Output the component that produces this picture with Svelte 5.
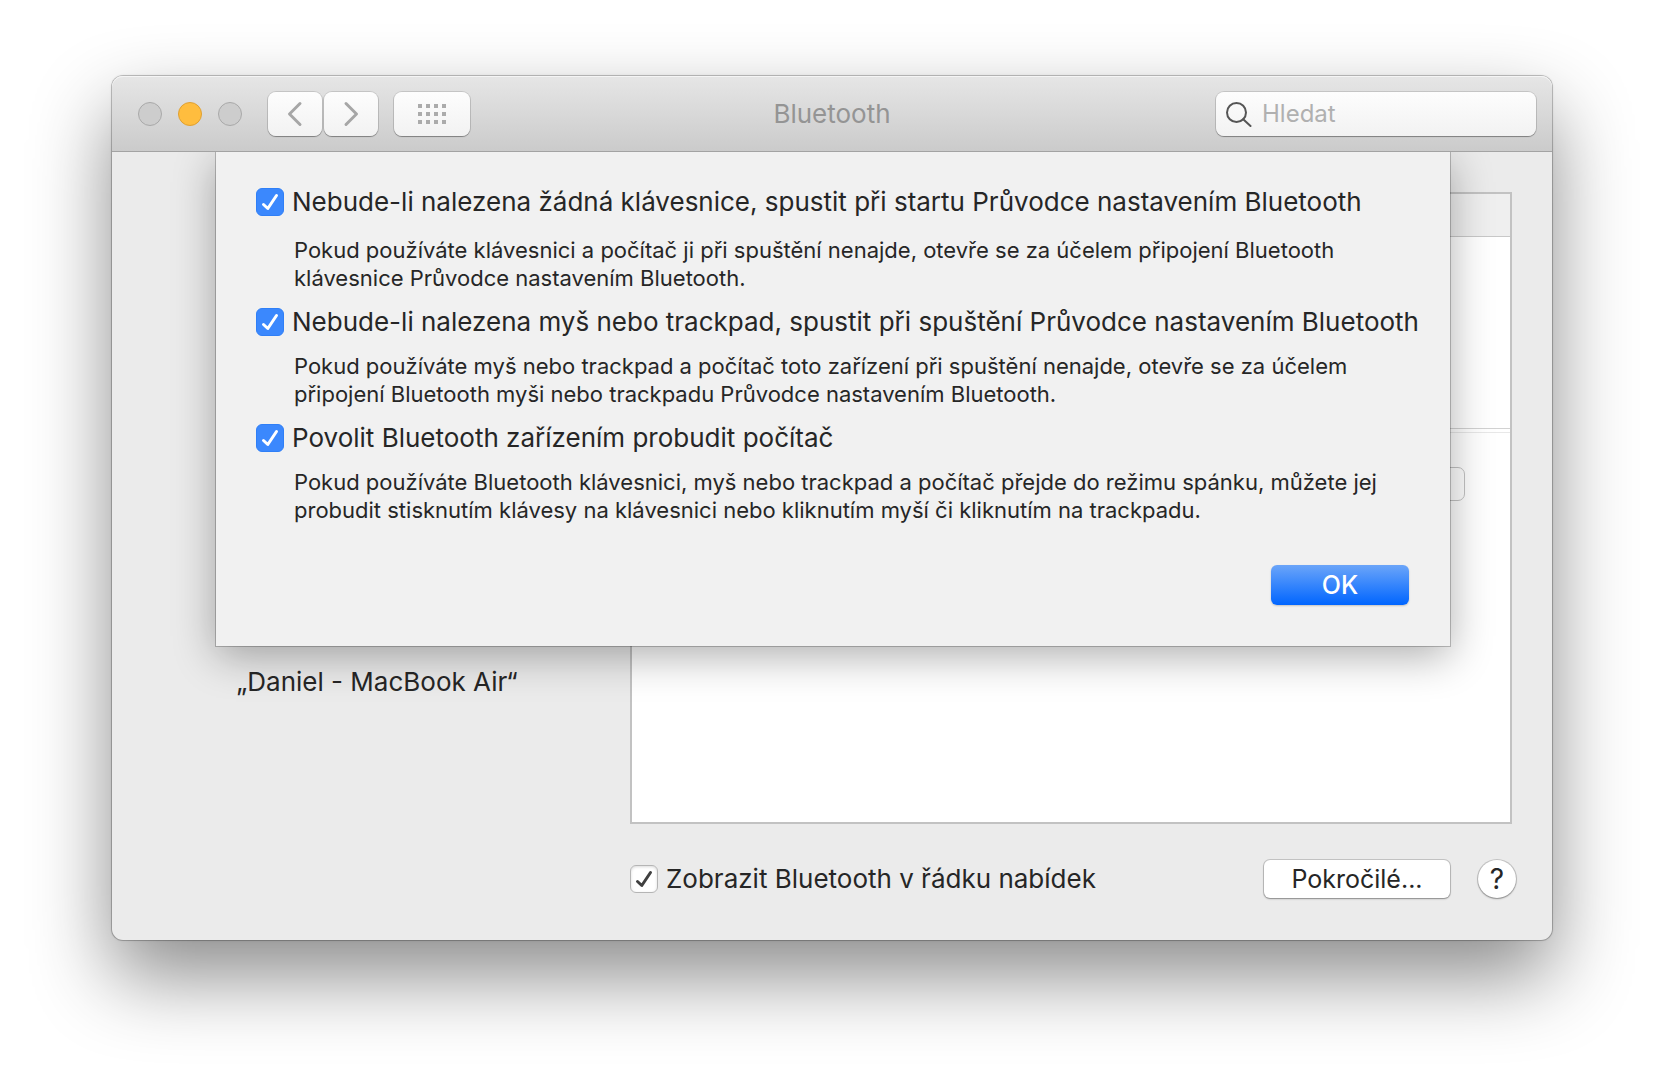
<script>
  let options = $state([
    {
      id: 'keyboard',
      checked: true,
      label: 'Nebude-li nalezena žádná klávesnice, spustit při startu Průvodce nastavením Bluetooth',
      lines: [
        'Pokud používáte klávesnici a počítač ji při spuštění nenajde, otevře se za účelem připojení Bluetooth',
        'klávesnice Průvodce nastavením Bluetooth.'
      ]
    },
    {
      id: 'pointer',
      checked: true,
      label: 'Nebude-li nalezena myš nebo trackpad, spustit při spuštění Průvodce nastavením Bluetooth',
      lines: [
        'Pokud používáte myš nebo trackpad a počítač toto zařízení při spuštění nenajde, otevře se za účelem',
        'připojení Bluetooth myši nebo trackpadu Průvodce nastavením Bluetooth.'
      ]
    },
    {
      id: 'wake',
      checked: true,
      label: 'Povolit Bluetooth zařízením probudit počítač',
      lines: [
        'Pokud používáte Bluetooth klávesnici, myš nebo trackpad a počítač přejde do režimu spánku, můžete jej',
        'probudit stisknutím klávesy na klávesnici nebo kliknutím myší či kliknutím na trackpadu.'
      ]
    }
  ]);
  let showInMenu = $state(true);
  let query = $state('');
  const dots = [0, 8, 16].flatMap((y) => [0, 8, 16, 24].map((x) => ({ x, y })));
</script>

<main class="desktop">
  <section class="window" aria-label="Bluetooth">
    <header class="titlebar">
      <div class="tools">
        <div class="lights">
          <button class="light" aria-label="Zavřít"></button>
          <button class="light amber" aria-label="Minimalizovat"></button>
          <button class="light" aria-label="Zvětšit"></button>
        </div>
        <div class="nav">
          <button class="tool" aria-label="Zpět">
            <svg width="16" height="26" viewBox="0 0 16 26"><path d="M13 2.500L2.500 13L13 23.500" /></svg>
          </button>
          <button class="tool" aria-label="Vpřed">
            <svg width="16" height="26" viewBox="0 0 16 26"><path d="M3 2.500L13.500 13L3 23.500" /></svg>
          </button>
        </div>
        <button class="tool wide" aria-label="Zobrazit vše">
          <svg width="28" height="20" viewBox="0 0 28 20">
            {#each dots as d}
              <rect x={d.x} y={d.y} width="4" height="4" />
            {/each}
          </svg>
        </button>
      </div>
      <h1>Bluetooth</h1>
      <label class="search">
        <svg width="26" height="26" viewBox="0 0 26 26"><circle cx="10.500" cy="11.500" r="9.500" /><path d="M17.200 18.200L24.500 25" /></svg>
        <input type="text" placeholder="Hledat" aria-label="Hledat" bind:value={query} />
      </label>
    </header>

    <div class="content">
      <p class="device">„Daniel - MacBook Air“</p>
      <div class="list">
        <div class="list-head"></div>
        <div class="list-row"></div>
        <div class="list-body"><button class="row-action" aria-label="Připojit"></button></div>
      </div>
      <footer>
        <label class="check">
          <input class="box plain" type="checkbox" bind:checked={showInMenu} />
          <svg class="tick" width="28" height="28" viewBox="0 0 28 28"><path d="M7.500 16.500L11.800 20.500L20.500 7.500" /></svg>
          <span>Zobrazit Bluetooth v řádku nabídek</span>
        </label>
        <div class="actions">
          <button class="push">Pokročilé...</button>
          <button class="help" aria-label="Nápověda">?</button>
        </div>
      </footer>

      <form class="sheet" onsubmit={(e) => e.preventDefault()}>
        {#each options as o (o.id)}
          <div class="option">
            <label class="check">
              <input class="box" type="checkbox" bind:checked={o.checked} aria-describedby={o.id} />
              <svg class="tick" width="28" height="28" viewBox="0 0 28 28"><path d="M7.500 16.500L11.800 20.500L20.500 7.500" /></svg>
              <span>{o.label}</span>
            </label>
            <p id={o.id}>{o.lines[0]}<br />{o.lines[1]}</p>
          </div>
        {/each}
        <button class="ok" type="submit">OK</button>
      </form>
    </div>
  </section>
</main>

<style>
  :global(body) {
    margin: 0;
    background: #fff;
  }
  .desktop {
    box-sizing: border-box;
    min-height: 100vh;
    padding: 76px 112px 148px;
    overflow: hidden;
    font-family: Inter, 'Liberation Sans', sans-serif;
    font-size: 26px;
    line-height: 28px;
    color: #262626;
  }
  button,
  input {
    box-sizing: border-box;
    margin: 0;
    padding: 0;
    border: 0;
    font: inherit;
    color: inherit;
  }
  svg {
    display: block;
    flex: none;
  }
  .window {
    border-radius: 11px;
    background: #ebebeb;
    box-shadow:
      0 0 0 1px rgba(0, 0, 0, 0.2),
      0 0 3px rgba(0, 0, 0, 0.15),
      0 36px 80px rgba(0, 0, 0, 0.46);
  }
  .titlebar {
    display: grid;
    grid-template-columns: 1fr auto 1fr;
    align-items: center;
    box-sizing: border-box;
    height: 76px;
    padding: 0 16px;
    border-bottom: 1px solid #a3a3a3;
    border-radius: 11px 11px 0 0;
    background: linear-gradient(#e6e6e6, #cbcbcb);
    box-shadow: inset 0 1px #f5f5f5;
  }
  .tools,
  .lights,
  .nav {
    display: flex;
    align-items: center;
  }
  .lights {
    gap: 16px;
    padding: 0 26px 0 10px;
  }
  .light {
    width: 24px;
    height: 24px;
    border: 1px solid #a9a9a9;
    border-radius: 50%;
    background: #cdcdcd;
  }
  .amber {
    border-color: #dfa032;
    background: #ffbd3e;
  }
  .nav {
    gap: 2px;
    margin-right: 16px;
  }
  .tool {
    display: grid;
    place-items: center;
    width: 54px;
    height: 44px;
    border-radius: 8px;
    background: linear-gradient(#fdfdfd, #f2f2f2);
    box-shadow:
      0 0 0 1px rgba(0, 0, 0, 0.12),
      0 1px 1px rgba(0, 0, 0, 0.3);
  }
  .tool path {
    fill: none;
    stroke: #a6a6a6;
    stroke-width: 3;
    stroke-linecap: round;
    stroke-linejoin: round;
  }
  .tool rect {
    fill: #ababab;
  }
  .wide {
    width: 76px;
  }
  h1 {
    margin: 0;
    font-size: 26px;
    font-weight: 400;
    color: #949494;
  }
  .search {
    display: flex;
    justify-self: end;
    align-items: center;
    gap: 10px;
    box-sizing: border-box;
    width: 320px;
    height: 44px;
    padding: 0 10px;
    border-radius: 8px;
    background: linear-gradient(#fdfdfd, #f2f2f2);
    box-shadow:
      0 0 0 1px rgba(0, 0, 0, 0.12),
      0 1px 1px rgba(0, 0, 0, 0.3);
  }
  .search svg {
    fill: none;
    stroke: #555;
    stroke-width: 2;
    stroke-linecap: round;
  }
  .search input {
    flex: 1;
    min-width: 0;
    background: none;
    outline: none;
    font-size: 24px;
  }
  .search input::placeholder {
    color: #b0b0b0;
    opacity: 1;
  }
  .content {
    position: relative;
    display: grid;
    grid-template-columns: 518px 1fr;
    row-gap: 36px;
    padding: 40px 36px 42px 0;
  }
  .device {
    margin: 0;
    padding: 476px 0 0 12px;
    text-align: center;
  }
  .list {
    display: flex;
    flex-direction: column;
    box-sizing: border-box;
    min-height: 632px;
    margin-right: 4px;
    border: 2px solid #c2c2c2;
    background: #fff;
  }
  .list-head {
    height: 42px;
    border-bottom: 1px solid #c8c8c8;
    background: #efefef;
  }
  .list-row {
    height: 191px;
    border-bottom: 1px solid #d2d2d2;
  }
  .list-body {
    flex: 1;
    margin-top: 3px;
    padding: 34px 45px 0 0;
    border-top: 1px solid #e8e8e8;
  }
  .row-action {
    display: block;
    width: 120px;
    height: 34px;
    margin-left: auto;
    border: 1px solid #c4c4c4;
    border-radius: 7px;
    background: #fff;
  }
  footer {
    grid-column: 2;
    display: flex;
    justify-content: space-between;
    align-items: center;
  }
  .actions {
    display: flex;
    align-items: center;
    gap: 28px;
  }
  .check {
    display: grid;
    grid-template-columns: 28px auto;
    justify-content: start;
    align-items: center;
    column-gap: 8px;
    white-space: nowrap;
  }
  .box,
  .tick {
    grid-area: 1 / 1;
  }
  .box {
    appearance: none;
    width: 28px;
    height: 28px;
    border: 1px solid #2f7ff7;
    border-radius: 6px;
    background: #3b88fd;
  }
  .plain {
    border-color: #b5b5b5;
    background: #fff;
    box-shadow: inset 0 1px 3px rgba(0, 0, 0, 0.15);
  }
  .tick {
    visibility: hidden;
    pointer-events: none;
    fill: none;
    stroke: #fff;
    stroke-width: 3;
    stroke-linecap: round;
    stroke-linejoin: round;
  }
  .box:checked + .tick {
    visibility: visible;
  }
  .plain + .tick {
    stroke: #404040;
  }
  .push,
  .help {
    height: 38px;
    background: #fff;
    box-shadow:
      0 0 0 1px rgba(0, 0, 0, 0.16),
      0 1px 2px rgba(0, 0, 0, 0.3);
  }
  .push {
    width: 186px;
    border-radius: 6px;
    font-size: 25px;
  }
  .help {
    width: 38px;
    border-radius: 50%;
    font-size: 28px;
  }
  .sheet {
    position: absolute;
    top: 0;
    left: 104px;
    right: 102px;
    display: flex;
    flex-direction: column;
    gap: 16px;
    box-sizing: border-box;
    padding: 36px 41px 41px 40px;
    background: #f1f1f1;
    clip-path: inset(0 -80px -80px -80px);
    box-shadow:
      0 0 0 1px rgba(0, 0, 0, 0.22),
      0 10px 40px rgba(0, 0, 0, 0.32);
  }
  .option p {
    margin: 16px 0 0 38px;
    font-size: 22px;
    white-space: nowrap;
  }
  .option:first-child p {
    margin-top: 20px;
  }
  .ok {
    align-self: flex-end;
    width: 138px;
    height: 40px;
    margin-top: 25px;
    border-radius: 6px;
    background: linear-gradient(#6ba5f9, #0065ff);
    box-shadow: 0 1px 2px rgba(0, 0, 0, 0.2);
    font-size: 25px;
    font-weight: 500;
    color: #fff;
  }
</style>
